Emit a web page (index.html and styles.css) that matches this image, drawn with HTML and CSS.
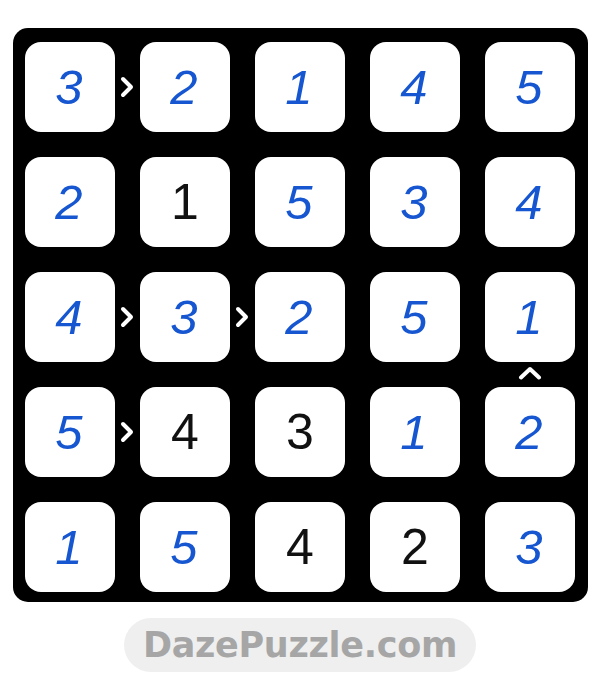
FILE: index.html
```html
<!DOCTYPE html>
<html lang="en">
<head>
    <meta charset="UTF-8">
    <meta name="viewport" content="width=device-width, initial-scale=1.0">
    <title>Futoshiki Solution</title>
    <link rel="stylesheet" href="styles.css">
</head>
<body>
    <div class="page">
        <div class="board">
            <div class="cell hand">3<svg class="sign sign-right" viewBox="0 0 14 22"><polyline points="3,3 11,11 3,19"/></svg></div>
            <div class="cell hand">2</div>
            <div class="cell hand">1</div>
            <div class="cell hand">4</div>
            <div class="cell hand">5</div>

            <div class="cell hand">2</div>
            <div class="cell given">1</div>
            <div class="cell hand">5</div>
            <div class="cell hand">3</div>
            <div class="cell hand">4</div>

            <div class="cell hand">4<svg class="sign sign-right" viewBox="0 0 14 22"><polyline points="3,3 11,11 3,19"/></svg></div>
            <div class="cell hand">3<svg class="sign sign-right" viewBox="0 0 14 22"><polyline points="3,3 11,11 3,19"/></svg></div>
            <div class="cell hand">2</div>
            <div class="cell hand">5</div>
            <div class="cell hand">1<svg class="sign sign-down" viewBox="0 0 24 14"><polyline points="3,11.5 12,3 21,11.5"/></svg></div>

            <div class="cell hand">5<svg class="sign sign-right" viewBox="0 0 14 22"><polyline points="3,3 11,11 3,19"/></svg></div>
            <div class="cell given">4</div>
            <div class="cell given">3</div>
            <div class="cell hand">1</div>
            <div class="cell hand">2</div>

            <div class="cell hand">1</div>
            <div class="cell hand">5</div>
            <div class="cell given">4</div>
            <div class="cell given">2</div>
            <div class="cell hand">3</div>
        </div>
        <div class="brand">DazePuzzle.com</div>
    </div>
</body>
</html>
```
FILE: styles.css
```css
body {
    margin: 0;
    background-color: #ffffff;
    font-family: 'Liberation Sans', Arial, sans-serif;
}
.page {
    display: flex;
    flex-direction: column;
    align-items: center;
    padding-top: 28px;
}
.board {
    display: grid;
    grid-template-columns: repeat(5, 90px);
    grid-auto-rows: 90px;
    gap: 25px;
    padding: 14px 13px 10px 12px;
    background-color: #000000;
    border-radius: 15px;
    margin-left: 1px;
}
.cell {
    position: relative;
    display: flex;
    justify-content: center;
    align-items: center;
    background-color: #ffffff;
    border-radius: 16px;
    line-height: 1;
}
.given {
    font-size: 50px;
    color: #111111;
}
.hand {
    font-size: 49px;
    font-style: italic;
    color: #1656d0;
    padding-right: 2px;
}
.sign {
    position: absolute;
    fill: none;
    stroke: #ffffff;
    stroke-width: 4;
    stroke-linecap: round;
    stroke-linejoin: round;
}
.sign-right {
    left: 95px;
    top: 34px;
    width: 14px;
    height: 22px;
}
.sign-down {
    left: 33px;
    top: 94px;
    width: 24px;
    height: 14px;
}
.brand {
    margin-top: 16px;
    width: 352px;
    height: 54px;
    border-radius: 27px;
    background-color: #efefef;
    color: #a6a6a6;
    font-family: 'DejaVu Sans', sans-serif;
    font-weight: bold;
    font-size: 35px;
    display: flex;
    justify-content: center;
    align-items: center;
    letter-spacing: -0.3px;
}
```
